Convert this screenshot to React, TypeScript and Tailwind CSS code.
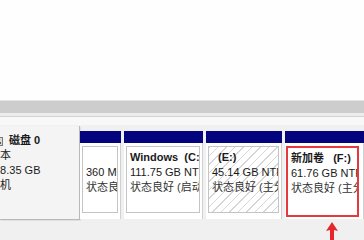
import type { ReactNode } from "react";

const font = "font-['Liberation_Sans','Noto_Sans_CJK_SC',sans-serif]";

function Partition({
  width,
  lines,
  hatched = false,
  selected = false,
}: {
  width: string;
  lines: [ReactNode, string, string];
  hatched?: boolean;
  selected?: boolean;
}) {
  const box = selected
    ? "border-2 border-[#e6393d] w-[73px] -ml-[1px] h-[71px]"
    : hatched
      ? "border border-[#c4c4c4] h-[67px] bg-[repeating-linear-gradient(135deg,#d6d6d6_0px,#d6d6d6_1px,#ffffff_1px,#ffffff_6px)]"
      : "border border-[#c4c4c4] h-[67px]";

  return (
    <div className={`${width} flex shrink-0 flex-col`}>
      <div className="h-[12px] bg-[#04047f]" />
      <div className="h-[76px] border-r border-[#d0d0d0] bg-white px-[2px] pt-[3px]">
        <div className={`${box} overflow-hidden whitespace-nowrap pl-[3px] pt-[3px] text-[11px] leading-[15px] text-[#1a1a1a]`}>
          <div className="h-[15px] whitespace-pre font-bold">{lines[0]}</div>
          <div>{lines[1]}</div>
          <div className="text-[#333]">{lines[2]}</div>
        </div>
      </div>
    </div>
  );
}

export default function App() {
  return (
    <div className={`flex h-[240px] w-[364px] flex-col overflow-hidden bg-white ${font}`}>
      <div className="h-[100px] shrink-0 bg-[#fefefe]" />
      <div className="h-[1px] shrink-0 bg-[#e4e4e4]" />
      <div className="h-[12px] shrink-0 bg-[#cdcdcd]" />
      <div className="h-[3px] shrink-0 bg-[#ececec]" />
      <div className="h-[1px] shrink-0 bg-[#d2d2d2]" />

      <div className="relative flex-1 bg-[#f0f0f0]">
        <div className="flex h-[8px] bg-[#f8f8f8]" />
        <div className="flex items-start">
          <div className="mt-[1px] h-[94px] w-[80px] shrink-0 overflow-hidden border-b border-r border-[#b9b9b9] bg-[#f4f4f4] pt-[7px] text-[11px] leading-[15px] text-[#1a1a1a] shadow-[1px_1px_0_#e0e0e0]">
            <div className="-ml-[11px] whitespace-nowrap">
              <div className="flex items-center gap-[6px] font-bold">
                <svg width="14" height="12" viewBox="0 0 14 12" className="shrink-0">
                  <rect x="0.5" y="2.5" width="13" height="8" fill="#d9d9d9" stroke="#7a7a7a" />
                  <rect x="2" y="7" width="10" height="2" fill="#5a5a5a" />
                </svg>
                <span>磁盘 0</span>
              </div>
              <div>基本</div>
              <div className="ml-[5px]">58.35 GB</div>
              <div>联机</div>
            </div>
          </div>

          <div className="mt-[6px] flex gap-[3px]">
            <Partition width="w-[41px]" lines={["", "360 MB NTFS", "状态良好 (系统, 活动, 主分区)"]} />
            <Partition
              width="w-[79px]"
              lines={["Windows  (C:)", "111.75 GB NTFS", "状态良好 (启动, 页面文件, 故障转储, 主分区)"]}
            />
            <Partition
              width="w-[76px]"
              hatched
              lines={["  (E:)", "45.14 GB NTFS", "状态良好 (主分区)"]}
            />
            <Partition
              width="w-[79px]"
              selected
              lines={["新加卷   (F:)", "61.76 GB NTFS", "状态良好 (主分区)"]}
            />
          </div>
        </div>

        <svg className="absolute left-[325px] top-[105px]" width="14" height="18" viewBox="0 0 14 18">
          <path d="M7 0 L13 9 L9 8 L9 18 L5 18 L5 8 L1 9 Z" fill="#e6262b" />
        </svg>
      </div>
    </div>
  );
}
